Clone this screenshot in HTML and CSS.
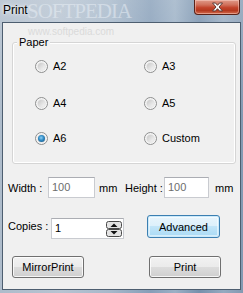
FILE: index.html
```html
<!DOCTYPE html>
<html lang="en">
<head>
    <meta charset="UTF-8">
    <meta name="viewport" content="width=device-width, initial-scale=1.0">
    <title>Print</title>
    <link rel="stylesheet" href="styles.css">
</head>
<body>

    <div class="window">
        <!-- Title bar -->
        <div class="titlebar">
            <span class="title">Print</span>
            <span class="watermark-big">SOFTPEDIA</span>
            <div class="close-btn">
                <svg width="13" height="10" viewBox="0 0 13 10">
                    <path d="M1.5 1 H4.5 L6.5 3.3 L8.5 1 H11.5 L8 5 L11.5 9 H8.5 L6.5 6.7 L4.5 9 H1.5 L5 5 Z" fill="#fff" stroke="#5b3a36" stroke-width="1" stroke-linejoin="round"/>
                </svg>
            </div>
        </div>

        <div class="client">
            <span class="watermark-small">www.softpedia.com</span>

            <!-- Paper group -->
            <div class="group">
                <span class="group-title">Paper</span>

                <div class="option-row first">
                    <label class="option"><span class="radio"></span>A2</label>
                    <label class="option"><span class="radio"></span>A3</label>
                </div>
                <div class="option-row second">
                    <label class="option"><span class="radio"></span>A4</label>
                    <label class="option"><span class="radio"></span>A5</label>
                </div>
                <div class="option-row third">
                    <label class="option"><span class="radio checked"></span>A6</label>
                    <label class="option"><span class="radio"></span>Custom</label>
                </div>
            </div>

            <!-- Size -->
            <div class="size-row">
                <span class="lbl-width">Width :</span>
                <div class="textbox tb-width">100</div>
                <span class="unit">mm</span>
                <span class="lbl-height">Height :</span>
                <div class="textbox tb-height">100</div>
                <span class="unit unit-2">mm</span>
            </div>

            <!-- Copies -->
            <div class="copies-row">
                <span class="lbl-copies">Copies :</span>
                <div class="textbox tb-copies">
                    <span>1</span>
                    <svg class="spinner" width="16" height="16" viewBox="0 0 16 16">
                        <rect x="0.5" y="0.5" width="15" height="7" rx="2" fill="#e4e4e4" stroke="#4a4a4a"/>
                        <rect x="0.5" y="8.5" width="15" height="7" rx="2" fill="#e4e4e4" stroke="#4a4a4a"/>
                        <path d="M4.5 6 L8 2.5 L11.5 6 Z" fill="#111"/>
                        <path d="M4.5 10 L8 13.5 L11.5 10 Z" fill="#111"/>
                    </svg>
                </div>
                <button class="btn btn-default">Advanced</button>
            </div>

            <!-- Actions -->
            <div class="button-row">
                <button class="btn">MirrorPrint</button>
                <button class="btn">Print</button>
            </div>
        </div>
    </div>

</body>
</html>
```

FILE: styles.css
```css
body {
    margin: 0;
    padding: 0;
    font-family: "Liberation Sans", Arial, sans-serif;
    font-size: 11px;
    color: #000;
    background: #9fb1c4;
}
.window {
    width: 243px;
    height: 293px;
    overflow: hidden;
    background:
        linear-gradient(180deg, rgba(255,255,255,0.2) 0%, rgba(255,255,255,0) 40%),
        linear-gradient(90deg, #aebccb 0%, #b6c3d1 25%, #a6b8ca 45%, #869eb8 62%, #9bb0c5 72%, #7690ac 82%, #95aac0 92%, #8399b2 100%);
}
.titlebar {
    position: relative;
    height: 22px;
    display: flex;
    align-items: flex-start;
    justify-content: space-between;
}
.title {
    margin: 3px 0 0 3px;
    font-size: 12px;
    text-shadow: 0 0 6px rgba(255,255,255,0.9), 0 0 3px rgba(255,255,255,0.9);
}
.watermark-big {
    position: absolute;
    left: 27px;
    top: 1px;
    font-family: "Liberation Serif", serif;
    font-size: 21px;
    letter-spacing: -1px;
    color: rgba(235,241,247,0.5);
    line-height: 20px;
}
.close-btn {
    width: 44px;
    height: 14px;
    margin-right: 3px;
    display: flex;
    align-items: center;
    justify-content: center;
    border: 1px solid #5a2218;
    border-top: none;
    border-radius: 0 0 4px 4px;
    background: linear-gradient(180deg, #e09a89 0%, #d0705b 35%, #c2432b 55%, #b4391f 75%, #d46d4f 100%);
    box-shadow: inset 0 0 0 1px rgba(255,220,210,0.45);
}
.client {
    position: relative;
    margin: 0 2px;
    height: 266px;
    background: #f0f0f0;
    border: 1px solid #4d5e70;
}
.watermark-small {
    position: absolute;
    left: 25px;
    top: 3px;
    font-size: 10px;
    color: #dadada;
}
.group {
    position: relative;
    box-sizing: border-box;
    margin: 19px 0 0 9px;
    width: 224px;
    height: 122px;
    padding-left: 22px;
    border: 1px solid #d5d5d5;
    border-radius: 3px;
    box-shadow: inset 0 0 0 1px #fff;
}
.group-title {
    position: absolute;
    left: 4px;
    top: -7px;
    padding: 0 2px;
    background: #f0f0f0;
    line-height: 13px;
}
.option-row {
    display: flex;
    height: 13px;
}
.option-row.first { margin-top: 17px; }
.option-row.second { margin-top: 24px; }
.option-row.third { margin-top: 22px; }
.option {
    flex: 0 0 109px;
    display: flex;
    align-items: center;
    gap: 5px;
    line-height: 13px;
}
.radio {
    box-sizing: border-box;
    flex: 0 0 13px;
    width: 13px;
    height: 13px;
    border-radius: 50%;
    border: 1px solid #8e8f8f;
    background: radial-gradient(circle at 50% 50%, #e6e6e6 0%, #d8d8d8 40%, #f4f4f4 60%, #fefefe 100%);
    position: relative;
}
.radio::after {
    content: "";
    position: absolute;
    left: 2px;
    top: 2px;
    width: 7px;
    height: 7px;
    border-radius: 50%;
    background: linear-gradient(135deg, #c8c8c8, #f7f7f7);
}
.radio.checked::after {
    background: radial-gradient(circle at 45% 40%, #8fd0f5 0%, #2f8ac4 45%, #1a4f7a 100%);
}
.size-row {
    display: flex;
    align-items: center;
    height: 21px;
    margin-top: 13px;
    padding-left: 5px;
}
.textbox {
    box-sizing: border-box;
    height: 21px;
    padding-left: 3px;
    line-height: 19px;
    background: #fff;
    border: 1px solid #c9cbd0;
    border-top-color: #abadb3;
    color: #6d6d6d;
}
.lbl-width { width: 40px; }
.tb-width { width: 47px; }
.unit { margin-left: 4px; width: 18px; }
.lbl-height { margin-left: 8px; width: 39px; }
.tb-height { width: 45px; }
.unit-2 { margin-left: 6px; }
.copies-row {
    display: flex;
    align-items: flex-start;
    margin-top: 17px;
    padding-left: 5px;
}
.lbl-copies {
    width: 43px;
    margin-top: 5px;
    line-height: 13px;
}
.tb-copies {
    display: flex;
    align-items: center;
    justify-content: space-between;
    width: 73px;
    margin-top: 3px;
    padding-right: 1px;
    color: #000;
}
.spinner {
    display: block;
}
.btn {
    box-sizing: border-box;
    width: 72px;
    height: 22px;
    padding: 0;
    font-family: "Liberation Sans", Arial, sans-serif;
    font-size: 11px;
    color: #000;
    border: 1px solid #707070;
    border-radius: 3px;
    background: linear-gradient(180deg, #f2f2f2 0%, #ebebeb 49%, #dddddd 50%, #cfcfcf 100%);
    box-shadow: inset 0 0 0 1px rgba(255,255,255,0.8);
}
.btn-default {
    width: 73px;
    height: 23px;
    margin-left: 23px;
    border-color: #3c7fb1;
    background: linear-gradient(180deg, #e9f5fc 0%, #dcf0fb 49%, #c2e5f8 50%, #a9daf5 100%);
    box-shadow: inset 0 0 0 1px #cbeafb, inset 0 0 0 2px rgba(255,255,255,0.5);
}
.button-row {
    display: flex;
    justify-content: space-between;
    margin: 17px 0 0 9px;
    width: 209px;
}
```
